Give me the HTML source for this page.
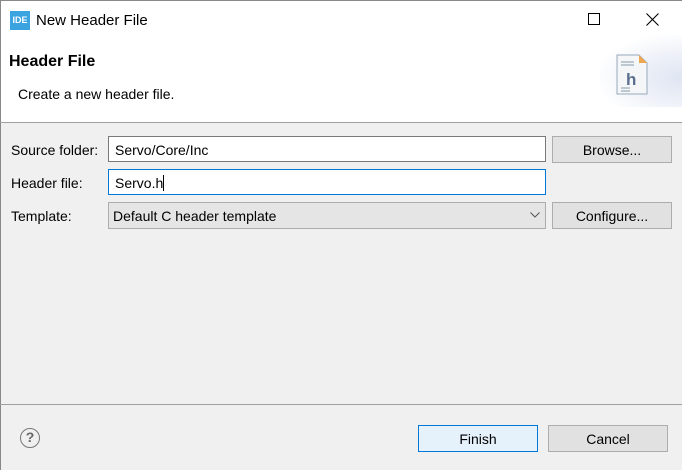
<!DOCTYPE html>
<html><head><style>
body{margin:0;width:682px;height:470px;overflow:hidden;font-family:"Liberation Sans",sans-serif;font-size:14px;color:#000;background:#f0f0f0;position:relative}
div{position:absolute;box-sizing:border-box}
.t{white-space:nowrap}
.btn{background:#e1e1e1;border:1px solid #adadad;text-align:center;line-height:26px}
.in{background:#fff;border:1px solid #7a7a7a;padding-left:6px;line-height:26px}
</style></head><body>
<div style="left:0;top:0;width:682px;height:122px;background:#fff;border-top:1px solid #888;border-left:1px solid #888"></div>
<div style="left:10px;top:11px;width:20px;height:19px;background:#3aa3e0;color:#fff;font-size:9px;font-weight:bold;text-align:center;line-height:19px">IDE</div>
<div class="t" style="left:36px;top:12px;font-size:15px">New Header File</div>
<div style="left:588px;top:13px;width:12px;height:12px;border:1px solid #000"></div>
<svg style="position:absolute;left:646px;top:13px" width="13" height="13"><path d="M0.5 0.5L12.5 12.5M12.5 0.5L0.5 12.5" stroke="#000" stroke-width="1.1"/></svg>
<div class="t" style="left:9px;top:53px;font-size:16px;font-weight:bold">Header File</div>
<div class="t" style="left:18px;top:86px">Create a new header file.</div>
<div style="left:600px;top:35px;width:82px;height:72px;background:radial-gradient(ellipse at 100% 60%,#dfe5f2 0%,#eef1f8 40%,#fff 75%)"></div>
<svg style="position:absolute;left:616px;top:54px" width="34" height="42"><path d="M1 1H23L31 9V40H1Z" fill="#f4f6f8" stroke="#9ab" /><path d="M23 1V9H31Z" fill="#f0a850"/><path d="M5 8H18M5 11H18M5 34H14M5 37H14" stroke="#89a" stroke-width="1"/><text x="10" y="31" font-family="Liberation Sans" font-weight="bold" font-size="17" fill="#5b6f8f">h</text></svg>
<div style="left:0;top:122px;width:682px;height:1px;background:#a0a0a0"></div>
<div style="left:0;top:123px;width:1px;height:347px;background:#888"></div>
<div class="t" style="left:11px;top:142px">Source folder:</div>
<div class="in" style="left:108px;top:136px;width:438px;height:26px">Servo/Core/Inc</div>
<div class="btn" style="left:552px;top:136px;width:120px;height:27px">Browse...</div>
<div class="t" style="left:11px;top:175px">Header file:</div>
<div class="in" style="left:108px;top:169px;width:438px;height:26px;border-color:#0078d7">Servo.h<span style="display:inline-block;width:1px;height:16px;background:#000;vertical-align:-3px"></span></div>
<div class="t" style="left:11px;top:208px">Template:</div>
<div style="left:108px;top:202px;width:438px;height:27px;background:#e5e5e5;border:1px solid #adadad;padding-left:4px;line-height:26px">Default C header template</div>
<svg style="position:absolute;left:530px;top:212px" width="10" height="6"><path d="M0.5 0.5L5 5L9.5 0.5" stroke="#555" fill="none"/></svg>
<div class="btn" style="left:552px;top:202px;width:120px;height:27px">Configure...</div>
<div style="left:0;top:404px;width:682px;height:1px;background:#a0a0a0"></div>
<div style="left:20px;top:428px;width:20px;height:20px;border:1.5px solid #777;border-radius:50%;text-align:center;line-height:17px;color:#666;font-size:14px;font-weight:bold">?</div>
<div class="btn" style="left:418px;top:425px;width:120px;height:27px;background:#e5f1fb;border-color:#0078d7">Finish</div>
<div class="btn" style="left:548px;top:425px;width:120px;height:27px">Cancel</div>
</body></html>
